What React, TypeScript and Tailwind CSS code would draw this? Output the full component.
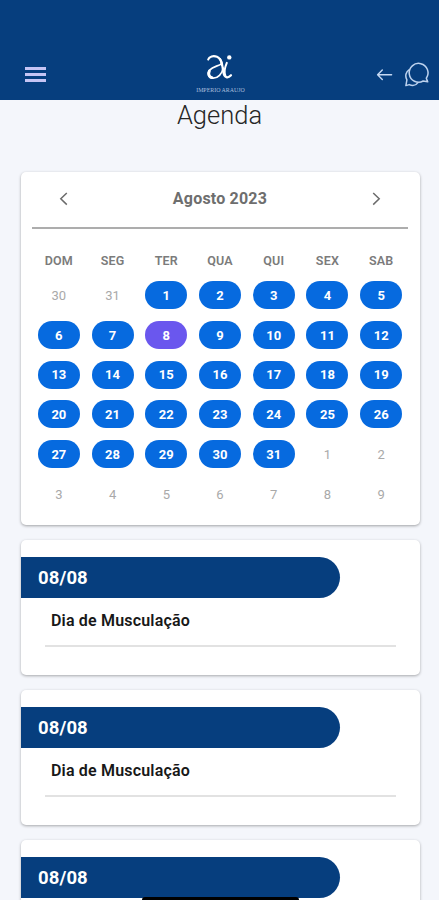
import React from 'react';
import clsx from 'clsx';

interface CalendarDay {
  day: number;
  outside?: boolean;
}

interface AgendaEvent {
  id: number;
  date: string;
  title?: string;
}

const WEEKDAYS = ['DOM', 'SEG', 'TER', 'QUA', 'QUI', 'SEX', 'SAB'];

const DAYS: CalendarDay[] = [
  ...[30, 31].map((day) => ({ day, outside: true })),
  ...Array.from({ length: 31 }, (_, i) => ({ day: i + 1 })),
  ...Array.from({ length: 9 }, (_, i) => ({ day: i + 1, outside: true })),
];

const EVENTS: AgendaEvent[] = [
  { id: 1, date: '08/08', title: 'Dia de Musculação' },
  { id: 2, date: '08/08', title: 'Dia de Musculação' },
  { id: 3, date: '08/08' },
];

const SELECTED_DAY = 8;

const Logo: React.FC = () => (
  <div className="flex w-[60px] flex-col items-center">
    <svg width="30" height="30" viewBox="0 0 30 30" fill="none" stroke="#fff" strokeLinecap="round">
      {/* top hook running down into the inner stem */}
      <path d="M3.2 6.6C4 3.4 8.5 2.4 12 3.8C15.6 5.3 16.4 8.5 17 12" strokeWidth="2.1" />
      <path d="M14.8 5.8C17.6 9 17.3 15 18.6 20.3C19.4 24.5 22.8 25.8 26 22.2" strokeWidth="2.2" />
      {/* bowl */}
      <path d="M16.8 10.6C13.5 13.2 8 13.5 4.9 16.8C1.8 20 3 24.8 7.5 25.2C13 25.6 17.2 20.5 18.2 15.2" strokeWidth="1.7" />
      <path d="M4.4 18C2.9 21 4.3 24.1 7 24.6" strokeWidth="2.8" />
      {/* outer stem and dot */}
      <path d="M21.8 9.8C20.2 13.5 18.8 18.5 20.3 22.3" strokeWidth="2" />
      <circle cx="24.3" cy="4.4" r="2.2" fill="#fff" stroke="none" />
    </svg>
    <span className="mt-[3px] whitespace-nowrap font-['Liberation_Serif',serif] text-[5.9px] leading-[9px] text-[#a9bfdd]">
      IMPERIO ARAUJO
    </span>
  </div>
);

const Header: React.FC = () => (
  <header className="grid h-[100px] grid-cols-3 bg-[#063e7e] pt-[50px]">
    <button aria-label="Menu" className="ml-[25px] mt-[17px] flex h-[15px] w-[21px] flex-col justify-between">
      <span className="h-[3px] w-full bg-[#c5c4f4]" />
      <span className="h-[3px] w-full bg-[#c5c4f4]" />
      <span className="h-[3px] w-full bg-[#c5c4f4]" />
    </button>
    <div className="flex justify-center pl-[2px] pt-[3px]">
      <Logo />
    </div>
    <div className="flex items-start justify-end gap-[11px] pr-[9px] pt-[11px]">
      <svg className="mt-[7px]" width="17" height="13" viewBox="0 0 17 13" fill="none" stroke="#c6d9f3" strokeWidth="1.4" strokeLinecap="round" strokeLinejoin="round">
        <path d="M15.6 6.8H2M6.3 2L1.6 6.8L6.3 11.4" />
      </svg>
      <svg width="26" height="27" viewBox="0 0 26 27" fill="none" stroke="#bcd2ee" strokeWidth="1.5" strokeLinejoin="round" strokeLinecap="round">
        <path d="M22.3 17.2A9.4 9.4 0 1 0 19.2 20L23.7 20.8Z" />
        <path d="M5 8.8C2.2 10.6 0.6 14.8 2.9 18.8L1.9 24.6L5.2 23.6C9 25.4 12 24.3 14 21.6" />
      </svg>
    </div>
  </header>
);

const Calendar: React.FC = () => (
  <section className="h-[353px] rounded-[5px] bg-white pl-[11px] pr-3 shadow-[0_1px_3px_rgba(0,0,0,0.35)]">
    <div className="flex h-[57px] items-center justify-between border-b-2 border-[#adadad] px-[26px] pb-[2px]">
      <svg width="11" height="14" viewBox="0 0 11 14" fill="none" stroke="#6b6b6b" strokeWidth="1.5">
        <path d="M8.8 1L2.8 6.8L8.8 12.6" />
      </svg>
      <h2 className="pt-px text-[16px] font-bold tracking-[0.2px] text-[#6e6e6e]">Agosto 2023</h2>
      <svg width="11" height="14" viewBox="0 0 11 14" fill="none" stroke="#6b6b6b" strokeWidth="1.5">
        <path d="M2.2 1L8.2 6.8L2.2 12.6" />
      </svg>
    </div>
    <div className="mt-[22px] grid grid-cols-7 text-center text-[12.5px] font-semibold leading-5 tracking-[0.2px] text-[#7b7b7b]">
      {WEEKDAYS.map((name) => (
        <span key={name}>{name}</span>
      ))}
    </div>
    <div className="mt-[10px] grid grid-cols-7 justify-items-center gap-y-[11.8px]">
      {DAYS.map(({ day, outside }, index) => (
        <span
          key={index}
          className={clsx(
            'flex h-7 w-[42px] items-center justify-center rounded-full pt-px text-[13px]',
            outside && 'text-[#a9a9a9]',
            !outside && 'font-bold text-white',
            !outside && (day === SELECTED_DAY ? 'bg-[#6a57ee]' : 'bg-[#066adf]')
          )}
        >
          {day}
        </span>
      ))}
    </div>
  </section>
);

const EventCard: React.FC<{ event: AgendaEvent }> = ({ event }) => (
  <article className="h-[135px] rounded-[5px] bg-white pt-[17px] shadow-[0_1px_3px_rgba(0,0,0,0.32)]">
    <div className="flex h-[41px] w-[319px] items-center rounded-r-full bg-[#063e7e] pl-[17px] pt-[2px] text-[18.5px] font-bold tracking-[0.1px] text-white">
      {event.date}
    </div>
    {event.title && (
      <div className="ml-6 mr-6 h-[49px] border-b-2 border-[#e2e2e2] pl-[6px] pt-[11px] text-[16px] font-semibold leading-6 tracking-[0.18px] text-[#181818]">
        {event.title}
      </div>
    )}
  </article>
);

const App: React.FC = () => {
  return (
    <div className="relative h-[900px] w-[439px] overflow-hidden bg-[#f4f6fb] font-[Roboto,sans-serif]">
      <Header />
      <h1 className="h-[72px] text-center text-[25.5px] font-light leading-[31px] text-[#262626]">Agenda</h1>
      <main className="flex flex-col gap-[15px] pl-[21px] pr-[19px]">
        <Calendar />
        {EVENTS.map((event) => (
          <EventCard key={event.id} event={event} />
        ))}
      </main>
      {/* System gesture bar */}
      <div className="absolute bottom-0 left-[142px] h-[3px] w-[157px] rounded-t-sm bg-black" />
    </div>
  );
};

export default App;
